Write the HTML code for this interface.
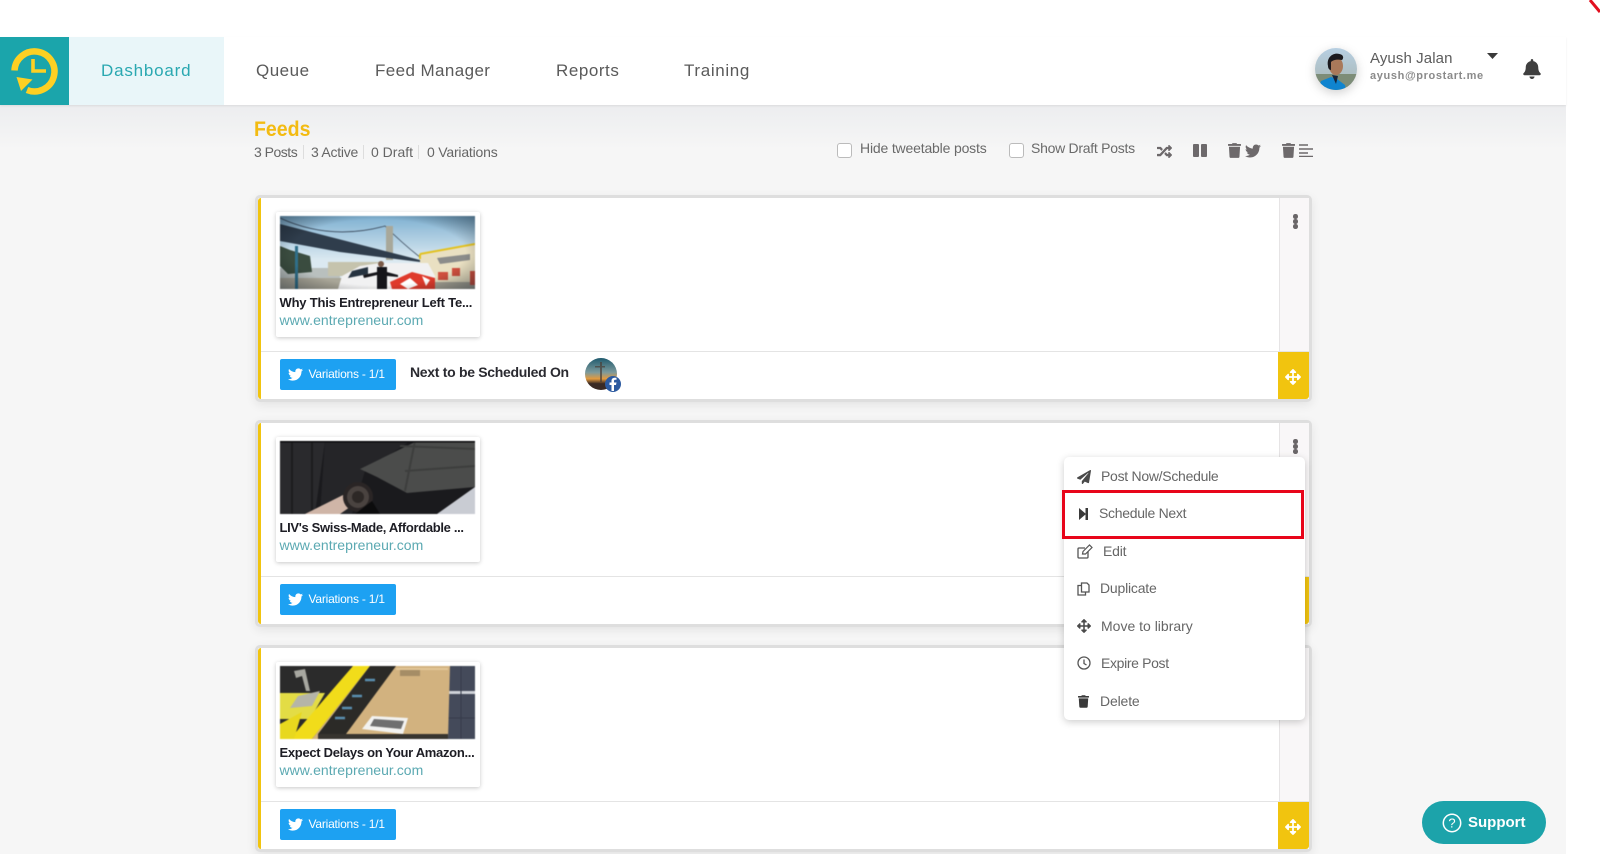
<!DOCTYPE html>
<html><head><meta charset="utf-8"><title>Feeds</title>
<style>
*{box-sizing:border-box}
html,body{margin:0;padding:0;width:1600px;height:854px;overflow:hidden;background:#fff;font-family:"Liberation Sans",sans-serif}
.a{position:absolute;white-space:nowrap}
#bg{position:absolute;left:0;top:105px;width:1566px;height:749px;background:linear-gradient(#ecedef 0,#f6f6f6 45px)}
.nav{top:60px;font-size:17px;line-height:22px;color:#5a5a5a}
.sub{top:144px;font-size:14px;line-height:16px;color:#666;letter-spacing:-.1px}
.sep{top:145px;width:1px;height:14px;background:#ddd}
.cb{top:143px;width:15px;height:15px;border:1px solid #bbb;border-radius:3px;background:#fff}
.lbl{top:140px;font-size:14px;line-height:16px;color:#6a6a6a}
.card{position:absolute;left:255px;width:1057px;height:207px;background:#fff;border:3px solid #dedede;border-radius:5px;box-shadow:0 3px 10px rgba(0,0,0,.08)}
.card .bar{position:absolute;left:0;top:0;bottom:0;width:3px;background:#f1c40f;border-radius:3px 0 0 3px}
.card .side{position:absolute;left:1021px;top:0;width:30px;bottom:0;background:#f9f7f8;border-left:1px solid #e6e4e5}
.card .hr{position:absolute;left:3px;right:0;top:153px;height:1px;background:#e4e4e4}
.card .foot{position:absolute;left:3px;right:0;top:154px;bottom:0;background:#fff}
.card .drag{position:absolute;left:1020px;top:154px;width:31px;bottom:0;background:#f1c40f;border-radius:0 0 3px 0}
.card .dots{position:absolute;left:1035px;top:16px;width:5px}
.card .dots i{display:block;width:4.600px;height:4.600px;border-radius:50%;background:#6a6668;margin-bottom:.4px}
.thumb{position:absolute;left:17.5px;top:14px;width:204px;height:125px;background:#fff;box-shadow:0 1px 4px rgba(0,0,0,.22);border-radius:2px}
.thumb svg{position:absolute;left:4px;top:4px;filter:blur(.45px)}
.thumb .t{position:absolute;left:4px;top:82px;font-size:13px;line-height:18px;font-weight:bold;color:#1d1d24;white-space:nowrap}
.thumb .u{position:absolute;left:4px;top:99px;font-size:14px;line-height:18px;color:#5ba9b2;letter-spacing:.03px;white-space:nowrap}
.btn{position:absolute;left:22px;top:161px;width:116px;height:31px;background:#1da1f2;border-radius:2px;color:#fff;font-size:12px;line-height:31px;padding-left:28.5px;letter-spacing:-.22px}
.btn svg{position:absolute;left:8px;top:8px}
.mi{font-size:14px;line-height:18px;color:#666}
</style></head><body>
<svg width="0" height="0" style="position:absolute"><defs>
<symbol id="tw" viewBox="0 0 512 512"><path d="M459.37 151.716c.325 4.548.325 9.097.325 13.645 0 138.72-105.583 298.558-298.558 298.558-59.452 0-114.68-17.219-161.137-47.106 8.447.974 16.568 1.299 25.34 1.299 49.055 0 94.213-16.568 130.274-44.832-46.132-.975-84.792-31.188-98.112-72.772 6.498.974 12.995 1.624 19.818 1.624 9.421 0 18.843-1.3 27.614-3.573-48.081-9.747-84.143-51.98-84.143-102.985v-1.299c13.969 7.797 30.214 12.67 47.431 13.319-28.264-18.843-46.781-51.005-46.781-87.391 0-19.492 5.197-37.36 14.294-52.954 51.655 63.675 129.3 105.258 216.365 109.807-1.624-7.797-2.599-15.918-2.599-24.04 0-57.828 46.782-104.934 104.934-104.934 30.213 0 57.502 12.67 76.67 33.137 23.715-4.548 46.456-13.32 66.599-25.34-7.798 24.366-24.366 44.833-46.132 57.827 21.117-2.273 41.584-8.122 60.426-16.243-14.292 20.791-32.161 39.308-52.628 54.253z"/></symbol>
<symbol id="tr" viewBox="0 0 448 512"><path d="M432 32H312l-9.4-18.7A24 24 0 0 0 281.1 0H166.8a23.72 23.72 0 0 0-21.4 13.3L136 32H16A16 16 0 0 0 0 48v32a16 16 0 0 0 16 16h416a16 16 0 0 0 16-16V48a16 16 0 0 0-16-16zM53.2 467a48 48 0 0 0 47.9 45h245.8a48 48 0 0 0 47.9-45L416 128H32z"/></symbol>
<symbol id="mv" viewBox="0 0 512 512"><path d="M352.201 425.775l-79.196 79.196c-9.373 9.373-24.568 9.373-33.941 0l-79.196-79.196c-15.119-15.119-4.411-40.971 16.971-40.97h51.162L228 284H127.196v51.162c0 21.382-25.851 32.09-40.971 16.971L7.029 272.937c-9.373-9.373-9.373-24.569 0-33.941L86.225 159.8c15.119-15.119 40.971-4.411 40.971 16.971V228H228V127.196h-51.23c-21.382 0-32.09-25.851-16.971-40.971l79.196-79.196c9.373-9.373 24.568-9.373 33.941 0l79.196 79.196c15.119 15.119 4.411 40.971-16.971 40.971h-51.162V228h100.804v-51.162c0-21.382 25.851-32.09 40.97-16.971l79.196 79.196c9.373 9.373 9.373 24.569 0 33.941L425.773 352.2c-15.119 15.119-40.971 4.411-40.97-16.971V284H284v100.804h51.23c21.382 0 32.09 25.851 16.971 40.971z"/></symbol>
</defs></svg>

<div id="bg"></div>
<svg class="a" style="left:1586px;top:0" width="14" height="14"><path d="M4 0L14 12" stroke="#e2101f" stroke-width="3"/></svg>

<!-- header -->
<div class="a" style="left:0;top:37px;width:1566px;height:68px;background:#fff;box-shadow:0 1px 2px rgba(0,0,0,.08)"></div>
<div class="a" style="left:0;top:37px;width:68.500px;height:68px;background:#1ba5ab"></div>
<svg class="a" style="left:0;top:37px" width="68" height="68" viewBox="0 0 68 68">
<path d="M14.500 33.500A20 20 0 1 1 27 53" fill="none" stroke="#fdd023" stroke-width="6.500"/>
<path d="M16.500 40L32.500 42.500L21 54Z" fill="#fdd023"/>
<path d="M33 22V34H46" fill="none" stroke="#fdd023" stroke-width="3.600"/>
</svg>
<div class="a" style="left:68.500px;top:37px;width:155px;height:68px;background:#e9f6f9"></div>
<div class="a nav" style="left:101px;color:#2aa8b1;letter-spacing:.8px">Dashboard</div>
<div class="a nav" style="left:256px;letter-spacing:.5px">Queue</div>
<div class="a nav" style="left:375px;letter-spacing:.4px">Feed Manager</div>
<div class="a nav" style="left:556px;letter-spacing:.55px">Reports</div>
<div class="a nav" style="left:684px;letter-spacing:.65px">Training</div>

<svg class="a" style="left:1315px;top:48px;filter:drop-shadow(0 3px 5px rgba(0,0,0,.18))" width="42" height="42" viewBox="0 0 42 42">
<defs><clipPath id="ac"><circle cx="21" cy="21" r="21"/></clipPath><linearGradient id="sk" x1="0" y1="0" x2="0" y2="1"><stop offset="0" stop-color="#b7cfe2"/><stop offset="1" stop-color="#a8b5b0"/></linearGradient></defs>
<g clip-path="url(#ac)"><rect width="42" height="42" fill="url(#sk)"/><rect y="26" width="42" height="16" fill="#7d8d78"/>
<path d="M3 42L6 33L16 29L22 31L30 37L31 42Z" fill="#0f84cf"/>
<ellipse cx="21" cy="18" rx="7" ry="9" fill="#a9795a"/>
<path d="M13 18C11 8 20 3 27 7C29 9 28 11 27 12C22 11 18 12 16 14L16 22C14 22 13 20 13 18Z" fill="#1c1a1e"/>
<path d="M17 27L23 28L21 36Z" fill="#16243a"/></g></svg>
<div class="a" style="left:1370px;top:49px;font-size:15px;line-height:20px;color:#5c5c5c;letter-spacing:.1px">Ayush Jalan</div>
<div class="a" style="left:1370px;top:69px;font-size:11px;line-height:14px;font-weight:bold;color:#8a8a8a;letter-spacing:.63px">ayush@prostart.me</div>
<svg class="a" style="left:1487px;top:53px" width="12" height="6"><path d="M0 0H11L5.500 6Z" fill="#3a3a3a"/></svg>
<svg class="a" style="left:1523px;top:59px" width="18" height="20" viewBox="0 0 448 512"><path fill="#3f3f3f" d="M224 512c35.32 0 63.97-28.65 63.97-64H160.03c0 35.35 28.65 64 63.97 64zm215.39-149.71c-19.32-20.76-55.47-51.99-55.47-154.29 0-77.7-54.48-139.9-127.94-155.16V32c0-17.67-14.32-32-31.98-32s-31.98 14.33-31.98 32v20.84C118.56 68.1 64.08 130.3 64.08 208c0 102.3-36.15 133.53-55.47 154.29-6 6.45-8.66 14.16-8.61 21.71.11 16.4 12.98 32 32.1 32h383.8c19.12 0 32-15.6 32.1-32 .05-7.55-2.61-15.27-8.61-21.71z"/></svg>

<!-- title row -->
<div class="a" style="left:254px;top:117px;font-size:21px;line-height:26px;font-weight:bold;color:#f3bb12;transform-origin:left;transform:scaleX(.93)">Feeds</div>
<div class="a sub" style="left:254px;letter-spacing:-.5px">3 Posts</div><div class="a sep" style="left:303px"></div>
<div class="a sub" style="left:311px;letter-spacing:-.25px">3 Active</div><div class="a sep" style="left:363px"></div>
<div class="a sub" style="left:371px;letter-spacing:0">0 Draft</div><div class="a sep" style="left:418px"></div>
<div class="a sub" style="left:427px;letter-spacing:-.2px">0 Variations</div>

<div class="a cb" style="left:837px"></div><div class="a lbl" style="left:860px;letter-spacing:-.17px">Hide tweetable posts</div>
<div class="a cb" style="left:1009px"></div><div class="a lbl" style="left:1031px;letter-spacing:-.27px">Show Draft Posts</div>
<svg class="a" style="left:1157px;top:144px" width="15" height="15" viewBox="0 0 512 512"><path fill="#6d696b" d="M504.971 359.029c9.373 9.373 9.373 24.569 0 33.941l-80 79.984c-15.01 15.01-40.971 4.49-40.971-16.971V416h-58.785a12.004 12.004 0 0 1-8.773-3.812l-70.556-75.596 53.333-57.143L352 336h32v-39.981c0-21.438 25.943-31.998 40.971-16.971l80 79.981zM12 176h84l52.781 56.551 53.333-57.143-70.556-75.596A11.999 11.999 0 0 0 122.785 96H12c-6.627 0-12 5.373-12 12v56c0 6.627 5.373 12 12 12zm372 0v39.984c0 21.46 25.961 31.98 40.971 16.971l80-79.984c9.373-9.373 9.373-24.569 0-33.941l-80-79.981C409.943 24.021 384 34.582 384 56.019V96h-58.785a12.004 12.004 0 0 0-8.773 3.812L96 336H12c-6.627 0-12 5.373-12 12v56c0 6.627 5.373 12 12 12h110.785c3.326 0 6.503-1.381 8.773-3.812L352 176h32z"/></svg>
<div class="a" style="left:1193px;top:144px;width:6px;height:13px;background:#6d696b;border-radius:1px"></div>
<div class="a" style="left:1201px;top:144px;width:6px;height:13px;background:#6d696b;border-radius:1px"></div>
<svg class="a" style="left:1228px;top:143px;fill:#6d696b" width="13" height="15"><use href="#tr"/></svg>
<svg class="a" style="left:1245px;top:143px;fill:#6d696b" width="16" height="16"><use href="#tw"/></svg>
<svg class="a" style="left:1282px;top:143px;fill:#6d696b" width="13" height="15"><use href="#tr"/></svg>
<svg class="a" style="left:1299px;top:144px" width="14" height="13"><path d="M0 1H9M0 5H14M0 9H9M0 12.500H14" stroke="#6d696b" stroke-width="1.400"/></svg>

<!-- card 1 -->
<div class="card" style="top:195px">
 <div class="side"></div><div class="foot"></div><div class="hr"></div><div class="bar"></div><div class="drag"></div>
 <div class="dots"><i></i><i></i><i></i></div>
 <div class="thumb">
 <svg width="195" height="73" viewBox="0 0 195 73"><defs><linearGradient id="s1" x1="0" y1="0" x2="0" y2="1"><stop offset="0" stop-color="#7fb1d2"/><stop offset=".6" stop-color="#dbe9f1"/></linearGradient><radialGradient id="v1" cx=".5" cy=".5" r=".75"><stop offset=".6" stop-color="#000" stop-opacity="0"/><stop offset="1" stop-color="#12202e" stop-opacity=".55"/></radialGradient></defs>
 <rect width="195" height="73" fill="url(#s1)"/>
 <path d="M0 2Q50 25 105 10Q125 30 145 45" fill="none" stroke="#3a4a5c" stroke-width=".8"/>
 <path d="M106 10h7v34h-7z" fill="#a8a89a"/>
 <path d="M0 8L140 44V46L60 36L0 25Z" fill="#2f3d4c"/>
 <path d="M0 52H60V73H0Z" fill="#b9c0be"/>
 <path d="M0 62H195V73H0Z" fill="#a9a698"/>
 <path d="M140 38L195 28V66H140Z" fill="#e9e0c2"/>
 <path d="M140 38V43M140 38L195 28" stroke="#e3c220" stroke-width="2" fill="none"/>
 <path d="M157 42L190 38V44L160 48Z" fill="#8b8c8a"/>
 <path d="M158 56h10v8h-10zM172 52h8v8h-8zM190 55h5v14h-5z" fill="#cf4f3e"/>
 <path d="M48 46h52v14H48z" fill="#c5c3ad"/>
 <path d="M0 30L10 34L30 40L32 56L8 58L0 50Z" fill="#3a4c3f"/>
 <path d="M15 30h3v43h-3z" fill="#2f6f8a"/>
 <path d="M58 73L62 60L80 50L100 47H148L155 60V73Z" fill="#f1f1f2"/>
 <path d="M72 55L88 51V58L68 62Z" fill="#263340"/>
 <path d="M110 66L132 56L155 62V73H112Z" fill="#df3a2c"/>
 <path d="M120 68L130 62L138 69L128 73ZM142 60L150 64L146 70Z" fill="#fff"/>
 <path d="M97 51h10v22H97z" fill="#15151a"/>
 <path d="M83 59L97 56V59L84 62ZM107 56L118 59V61L107 60Z" fill="#15151a"/>
 <circle cx="101" cy="48" r="3" fill="#7a5a48"/>
 <rect width="195" height="73" fill="url(#v1)"/></svg>
 <div class="t" style="letter-spacing:-.2px">Why This Entrepreneur Left Te...</div>
 <div class="u">www.entrepreneur.com</div>
 </div>
 <div class="btn"><svg width="15" height="15" fill="#fff"><use href="#tw"/></svg>Variations - 1/1</div>
 <div class="a" style="left:152px;top:165px;font-size:14px;line-height:18px;font-weight:bold;color:#2a2a30;letter-spacing:-.3px">Next to be Scheduled On</div>
 <svg class="a" style="left:327px;top:160px" width="40" height="38" viewBox="0 0 40 38">
 <defs><linearGradient id="sun" x1="0" y1="0" x2="0" y2="1"><stop offset="0" stop-color="#1f5a6e"/><stop offset=".45" stop-color="#7d9a9c"/><stop offset=".65" stop-color="#e39a3e"/><stop offset=".8" stop-color="#3a2a24"/></linearGradient></defs>
 <circle cx="16" cy="16" r="16" fill="url(#sun)"/>
 <path d="M15 4h2v20h-2zM10 8h10v1.500H10z" fill="#4a3f38" opacity=".7"/>
 <circle cx="28" cy="26" r="8" fill="#2c5aa0"/>
 <path d="M29 33V27H31L31.500 24.500H29V23C29 22 29.500 21.800 30.500 21.800H31.500V19.800H30C27.500 19.800 26.500 21 26.500 23V24.500H24.500V27H26.500V33Z" fill="#fff"/></svg>
</div>

<!-- card 2 -->
<div class="card" style="top:420px">
 <div class="side"></div><div class="foot"></div><div class="hr"></div><div class="bar"></div><div class="drag"></div>
 <div class="dots"><i></i><i></i><i></i></div>
 <div class="thumb">
 <svg width="195" height="73" viewBox="0 0 195 73">
 <rect width="195" height="73" fill="#1a1a1d"/>
 <path d="M0 0H45L35 73H0Z" fill="#2a2a2d"/>
 <path d="M32 0V73M12 0V73" stroke="#1c1c1e" stroke-width="2"/>
 <path d="M45 0H130L85 30L72 73H40Z" fill="#252528"/>
 <path d="M80 28L137 0H195V46L127 52L97 36Z" fill="#4b4c4b"/>
 <path d="M120 5L195 8M125 30L195 25M135 0L125 50" stroke="#3d3e3d" stroke-width="2" fill="none"/>
 <path d="M157 73L195 46V73Z" fill="#c9ccd3"/>
 <path d="M25 73L63 54L70 66L60 73Z" fill="#cfb5a7"/>
 <circle cx="78" cy="56" r="15" fill="#2a2525"/><circle cx="78" cy="56" r="11" fill="#4a4340"/><circle cx="78" cy="56" r="6" fill="#2d2826"/>
 <path d="M92 60L100 73H75Z" fill="#0c0c0d"/>
 <rect width="195" height="1.500" fill="#08080a"/></svg>
 <div class="t" style="letter-spacing:-.33px">LIV's Swiss-Made, Affordable ...</div>
 <div class="u">www.entrepreneur.com</div>
 </div>
 <div class="btn"><svg width="15" height="15" fill="#fff"><use href="#tw"/></svg>Variations - 1/1</div>
</div>

<!-- card 3 -->
<div class="card" style="top:645px">
 <div class="side"></div><div class="foot"></div><div class="hr"></div><div class="bar"></div><div class="drag"></div>
 <div class="dots"><i></i><i></i><i></i></div>
 <div class="thumb">
 <svg width="195" height="73" viewBox="0 0 195 73">
 <rect width="195" height="73" fill="#444a5a"/>
 <path d="M167 25H195V28H167Z" fill="#cfd2d8"/>
 <path d="M167 0V73M181 0V73M167 52H195" stroke="#363b4a" stroke-width="1"/>
 <path d="M0 0H73L27 73H0Z" fill="#2b2b2b"/>
 <path d="M0 27H45L30 53H0Z" fill="#e3dc45"/>
 <path d="M18 30L40 25L32 40L10 42Z" fill="#b5b5a8"/>
 <path d="M14 5L25 3L30 25H26L22 10L16 12Z" fill="#a7a7a0"/>
 <path d="M73 0H90L32 73H10Z" fill="#f1dc1a"/>
 <path d="M0 58L22 46L14 73H0Z" fill="#e8d81e"/>
 <path d="M90 0H170L168 73H32Z" fill="#d2b27f"/>
 <path d="M90 0H116L66 68H38Z" fill="#2b2a27"/>
 <path d="M85 14h10M72 30h10M62 42h10M55 52h10" stroke="#5a8fb0" stroke-width="2.500"/>
 <path d="M116 2H168V4H116Z" fill="#e2c697"/>
 <path d="M38 68H168V73H38Z" fill="#37342f"/>
 <path d="M92 50L128 52L123 68L82 63Z" fill="#f2f2f0"/>
 <path d="M94 53L124 55L121 63L90 60Z" fill="#6f6f6f"/>
 <path d="M120 4h20v6h-20z" fill="#a58d66"/>
 </svg>
 <div class="t" style="letter-spacing:-.3px">Expect Delays on Your Amazon...</div>
 <div class="u">www.entrepreneur.com</div>
 </div>
 <div class="btn"><svg width="15" height="15" fill="#fff"><use href="#tw"/></svg>Variations - 1/1</div>
</div>

<!-- drag arrows -->
<svg class="a" style="left:1285px;top:369px" width="16" height="16" fill="#fff"><use href="#mv"/></svg>
<svg class="a" style="left:1285px;top:819px" width="16" height="16" fill="#fff"><use href="#mv"/></svg>

<!-- menu -->
<div class="a" style="left:1064px;top:457px;width:241px;height:263px;background:#fff;border-radius:5px;box-shadow:0 2px 8px rgba(0,0,0,.2)"></div>
<div class="a" style="left:1062px;top:490px;width:242px;height:49px;border:3.500px solid #e8051a"></div>
<svg class="a" style="left:1077px;top:470px" width="14" height="14" viewBox="0 0 512 512"><path fill="#4a4a4a" d="M476 3.2L12.5 270.6c-18.1 10.4-15.8 35.6 2.2 43.2L121 358.4l287.3-253.2c5.5-4.9 13.3 2.600 8.600 8.300L176 407v80.5c0 23.6 28.5 32.9 42.5 15.8L282 426l124.6 52.2c14.2 6 30.4-2.900 33-18.2l72-432C515 7.800 493.300-6.800 476 3.200z"/></svg>
<div class="a mi" style="left:1101px;top:467px;letter-spacing:-.28px">Post Now/Schedule</div>
<svg class="a" style="left:1079px;top:508px" width="9" height="12"><path d="M0 0L7 6L0 12Z" fill="#3a3a3a"/><path d="M6.500 0H9V12H6.500Z" fill="#3a3a3a"/></svg>
<div class="a mi" style="left:1099px;top:504px;letter-spacing:-.3px">Schedule Next</div>
<svg class="a" style="left:1077px;top:544px" width="16" height="15" viewBox="0 0 16 15"><path d="M11 7.500V13a1 1 0 0 1-1 1H2a1 1 0 0 1-1-1V5a1 1 0 0 1 1-1H8" fill="none" stroke="#555" stroke-width="1.300"/><path d="M5.500 10L6 7.500L12.500 1L15 3.500L8.500 10Z" fill="none" stroke="#555" stroke-width="1.200"/></svg>
<div class="a mi" style="left:1103px;top:542px;letter-spacing:-.2px">Edit</div>
<svg class="a" style="left:1077px;top:582px" width="13" height="14" viewBox="0 0 13 14"><path d="M4.500 1H10L12 3V10H4.500Z" fill="none" stroke="#555" stroke-width="1.300"/><path d="M4.500 3.500H1V13H8.500V10" fill="none" stroke="#555" stroke-width="1.300"/></svg>
<div class="a mi" style="left:1100px;top:579px;letter-spacing:-.2px">Duplicate</div>
<svg class="a" style="left:1077px;top:619px;fill:#4a4a4a" width="14" height="14"><use href="#mv"/></svg>
<div class="a mi" style="left:1101px;top:617px">Move to library</div>
<svg class="a" style="left:1077px;top:656px" width="14" height="14" viewBox="0 0 14 14"><circle cx="7" cy="7" r="6" fill="none" stroke="#555" stroke-width="1.300"/><path d="M7 3.500V7.500L9.500 9" fill="none" stroke="#555" stroke-width="1.300"/></svg>
<div class="a mi" style="left:1101px;top:654px;letter-spacing:-.35px">Expire Post</div>
<svg class="a" style="left:1078px;top:695px;fill:#3a3a3a" width="11" height="13"><use href="#tr"/></svg>
<div class="a mi" style="left:1100px;top:692px;letter-spacing:-.15px">Delete</div>

<!-- support -->
<div class="a" style="left:1422px;top:801px;width:124px;height:43px;background:#1ca3aa;border-radius:22px"></div>
<svg class="a" style="left:1442px;top:813px" width="20" height="20" viewBox="0 0 20 20"><circle cx="10" cy="10" r="8.700" fill="none" stroke="#fff" stroke-width="1.500"/><text x="10" y="14.500" text-anchor="middle" font-size="13" font-family="Liberation Sans" fill="#fff">?</text></svg>
<div class="a" style="left:1468px;top:814px;font-size:15px;line-height:18px;font-weight:bold;color:#fff;letter-spacing:0">Support</div>

</body></html>
